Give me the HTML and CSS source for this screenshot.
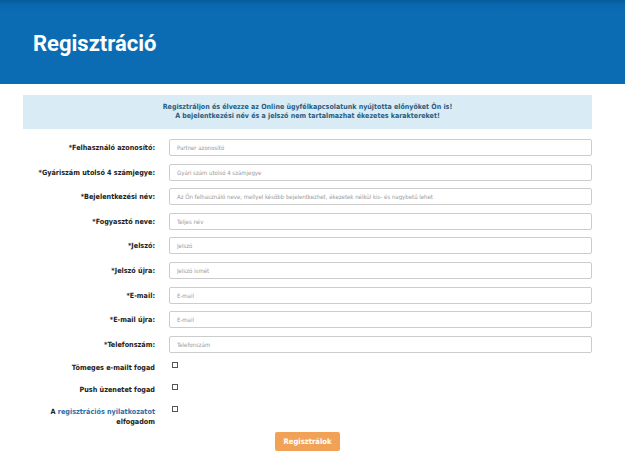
FILE: index.html
```html
<!DOCTYPE html>
<html lang="hu">
<head>
<meta charset="utf-8">
<title>Regisztráció</title>
<link rel="stylesheet" href="styles.css">
</head>
<body>
<header class="page-header">
  <h1 class="page-title">Regisztráció</h1>
</header>
<main class="content">
  <div class="info-box">
    <p>Regisztráljon és élvezze az Online ügyfélkapcsolatunk nyújtotta előnyöket Ön is!</p>
    <p>A bejelentkezési név és a jelszó nem tartalmazhat ékezetes karaktereket!</p>
  </div>
  <form class="reg-form">
    <div class="fields">
      <label class="field-label">*Felhasználó azonosító:</label>
      <input class="field-input" type="text" placeholder="Partner azonosító">
      <label class="field-label">*Gyáriszám utolsó 4 számjegye:</label>
      <input class="field-input" type="text" placeholder="Gyári szám utolsó 4 számjegye">
      <label class="field-label">*Bejelentkezési név:</label>
      <input class="field-input" type="text" placeholder="Az Ön felhasználó neve, mellyel később bejelentkezhet, ékezetek nélkül kis- és nagybetű lehet">
      <label class="field-label">*Fogyasztó neve:</label>
      <input class="field-input" type="text" placeholder="Teljes név">
      <label class="field-label">*Jelszó:</label>
      <input class="field-input" type="password" placeholder="Jelszó">
      <label class="field-label">*Jelszó újra:</label>
      <input class="field-input" type="password" placeholder="Jelszó ismét">
      <label class="field-label">*E-mail:</label>
      <input class="field-input" type="text" placeholder="E-mail">
      <label class="field-label">*E-mail újra:</label>
      <input class="field-input" type="text" placeholder="E-mail">
      <label class="field-label">*Telefonszám:</label>
      <input class="field-input" type="text" placeholder="Telefonszám">
    </div>
    <div class="checks">
      <div class="check-label">Tömeges e-mailt fogad</div>
      <div class="check-cell"><span class="check-box"></span></div>
      <div class="check-label">Push üzenetet fogad</div>
      <div class="check-cell"><span class="check-box"></span></div>
      <div class="check-label">A <a class="link" href="#">regisztrációs nyilatkozatot</a><br>elfogadom</div>
      <div class="check-cell"><span class="check-box"></span></div>
    </div>
    <div class="actions">
      <button class="submit-btn" type="button">Regisztrálok</button>
    </div>
  </form>
</main>
</body>
</html>
```

FILE: styles.css
```css
html, body {
  margin: 0;
  padding: 0;
  background: #ffffff;
}

body {
  font-family: "DejaVu Sans Condensed", "DejaVu Sans", sans-serif;
  color: #222222;
}

.page-header {
  height: 84px;
  box-sizing: border-box;
  padding: 31px 0 0 33px;
  background: linear-gradient(to bottom, #075a9c 0px, #0a69af 5px, #0b6cb4 12px, #0b6cb4 100%);
}

.page-title {
  margin: 0;
  font-family: Roboto, "Liberation Sans", sans-serif;
  font-weight: 700;
  font-size: 22px;
  line-height: 26px;
  color: #ffffff;
}

.content {
  padding: 11px 33px 0 23px;
}

.info-box {
  height: 34px;
  box-sizing: border-box;
  padding-top: 7px;
  background: #d9ebf5;
  text-align: center;
  color: #2b5d80;
  font-weight: 700;
  font-size: 7.05px;
  line-height: 9px;
}

.info-box p {
  margin: 0;
}

.reg-form {
  margin-top: 10px;
}

.fields {
  display: grid;
  grid-template-columns: 132px 1fr;
  column-gap: 14px;
  row-gap: 7.6px;
  align-items: center;
}

.field-label {
  text-align: right;
  font-weight: 700;
  font-size: 7.2px;
  line-height: 17px;
  color: #222222;
  white-space: nowrap;
}

.field-input {
  height: 17px;
  box-sizing: border-box;
  margin: 0;
  padding: 0 7px;
  border: 1px solid #cccccc;
  border-radius: 2px;
  background: #ffffff;
  font-family: "DejaVu Sans Condensed", "DejaVu Sans", sans-serif;
  font-size: 6px;
  color: #555555;
  outline: none;
  width: 100%;
}

.field-input::placeholder {
  color: #999999;
}

.checks {
  margin-top: 9px;
  display: grid;
  grid-template-columns: 132px 1fr;
  column-gap: 14px;
  grid-auto-rows: 22px;
}

.check-label {
  text-align: right;
  font-weight: 700;
  font-size: 7.2px;
  line-height: 9.7px;
  padding-top: 1.5px;
  color: #222222;
  white-space: nowrap;
}

.link {
  color: #2f6fa8;
  text-decoration: none;
}

.check-cell {
  padding-left: 3px;
}

.check-box {
  display: block;
  width: 6px;
  height: 6px;
  border: 1px solid #555555;
  box-sizing: border-box;
  background: #ffffff;
}

.actions {
  margin-top: 4px;
  display: flex;
  justify-content: center;
}

.submit-btn {
  width: 65px;
  height: 19px;
  padding: 0;
  border: none;
  border-radius: 2px;
  background: #f2a257;
  color: #ffffff;
  font-family: "DejaVu Sans Condensed", "DejaVu Sans", sans-serif;
  font-weight: 700;
  font-size: 7.6px;
  cursor: pointer;
}
```
